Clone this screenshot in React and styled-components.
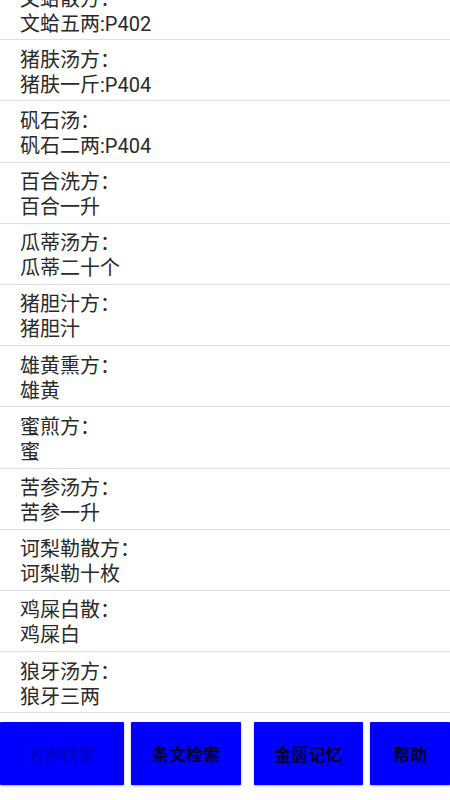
import React from 'react';
import styled, {createGlobalStyle} from 'styled-components';

const GlobalStyle = createGlobalStyle`
  html, body {
    margin: 0;
    padding: 0;
    background: #ffffff;
  }
  body {
    font-family: Roboto, "Noto Sans CJK SC", sans-serif;
  }
`;

const Page = styled.div`
  height: 800px;
  width: 450px;
  display: flex;
  flex-direction: column;
  background: #ffffff;
  overflow: hidden;
`;

const ListArea = styled.div`
  flex: 1;
  overflow: hidden;
`;

const List = styled.ul`
  list-style: none;
  margin: -21px 0 0 0;
  padding: 0;
`;

const Row = styled.li`
  padding: 7.5px 0 2.7px 20px;
  border-bottom: 1px solid #dedede;
  color: #2a2a2a;
  font-size: 20px;
  line-height: 25px;
`;

const Line = styled.div`
  white-space: nowrap;
`;

const Footer = styled.div`
  height: 86px;
  flex-shrink: 0;
  display: flex;
  align-items: flex-start;
  padding-top: 8px;
  box-sizing: border-box;
`;

const Button = styled.button`
  width: ${props => props.w}px;
  margin-left: ${props => props.gap || 0}px;
  height: 63px;
  border: none;
  border-radius: 1px;
  background: #0000ff;
  box-shadow: 0 1px 2px rgba(0, 0, 60, 0.35);
  color: ${props => (props.disabled ? 'rgba(0, 0, 0, 0.22)' : 'rgba(0, 0, 0, 0.85)')};
  font-family: Roboto, "Noto Sans CJK SC", sans-serif;
  font-size: 17px;
  font-weight: 700;
  padding: 0;
  flex-shrink: 0;
`;

const recipes = [
  ['文蛤散方：', '文蛤五两:P402'],
  ['猪肤汤方：', '猪肤一斤:P404'],
  ['矾石汤：', '矾石二两:P404'],
  ['百合洗方：', '百合一升'],
  ['瓜蒂汤方：', '瓜蒂二十个'],
  ['猪胆汁方：', '猪胆汁'],
  ['雄黄熏方：', '雄黄'],
  ['蜜煎方：', '蜜'],
  ['苦参汤方：', '苦参一升'],
  ['诃梨勒散方：', '诃梨勒十枚'],
  ['鸡屎白散：', '鸡屎白'],
  ['狼牙汤方：', '狼牙三两'],
];

export default function App() {
  return (
    <Page>
      <GlobalStyle />
      <ListArea>
        <List>
          {recipes.map(([name, dose]) => (
            <Row key={name}>
              <Line>{name}</Line>
              <Line>{dose}</Line>
            </Row>
          ))}
        </List>
      </ListArea>
      <Footer>
        <Button w={124} disabled>方剂检索</Button>
        <Button w={110} gap={7}>条文检索</Button>
        <Button w={109} gap={13}>金匮记忆</Button>
        <Button w={80} gap={7}>帮助</Button>
      </Footer>
    </Page>
  );
}
